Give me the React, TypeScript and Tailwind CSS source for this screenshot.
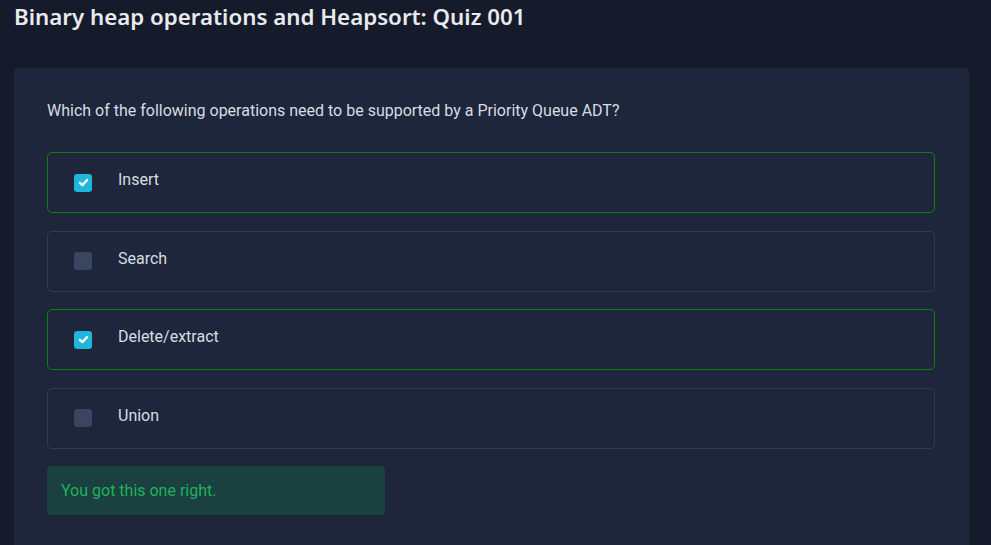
import React from "react";

const options = [
  { label: "Insert", checked: true },
  { label: "Search", checked: false },
  { label: "Delete/extract", checked: true },
  { label: "Union", checked: false },
];

function Check({ checked }: { checked: boolean }) {
  if (!checked) return <div className="w-[18px] h-[18px] rounded-[3px] bg-[#3a4661]" />;
  return (
    <div className="w-[18px] h-[18px] rounded-[3px] bg-[#1fb6d9] flex items-center justify-center">
      <svg width="11" height="11" viewBox="0 0 10 10">
        <path d="M1.8 5.3 L4 7.4 L8.3 2.7" stroke="white" strokeWidth="2.1" fill="none" strokeLinecap="round" strokeLinejoin="round" />
      </svg>
    </div>
  );
}

export default function App() {
  return (
    <div className="w-[991px] h-[545px] overflow-hidden bg-[#151b2b] text-[#e5e7eb]" style={{ fontFamily: "Roboto, 'Noto Sans', sans-serif" }}>
      <div className="px-[14px] pt-[3px] h-[68px]">
        <h1 className="text-[22.3px] leading-[28px] font-semibold text-[#e8eaee]" style={{ fontFamily: "'Noto Sans', sans-serif" }}>
          Binary heap operations and Heapsort: Quiz 001
        </h1>
      </div>
      <div className="mx-[14px] w-[955px] h-[500px] bg-[#1d263a] rounded-[4px] px-[33px] pt-[32px]">
        <p className="text-[16px] leading-[22px] text-[#d8dce3]">
          Which of the following operations need to be supported by a Priority Queue ADT?
        </p>
        <div className="mt-[30px] flex flex-col gap-[17.5px] w-[888px]">
          {options.map((o) => (
            <div
              key={o.label}
              className={`h-[61px] rounded-[5px] border flex items-center pl-[26px] gap-[26px] ${o.checked ? "border-[#0b800b]" : "border-[#303c55]"}`}
            >
              <Check checked={o.checked} />
              <span className="text-[16px] text-[#d8dce3] -mt-[5px]">{o.label}</span>
            </div>
          ))}
        </div>
        <div className="mt-[17.5px] w-[338px] h-[49px] rounded-[4px] bg-[#1a4040] flex items-center pl-[14px]">
          <span className="text-[16px] text-[#1db35a]">You got this one right.</span>
        </div>
      </div>
    </div>
  );
}
